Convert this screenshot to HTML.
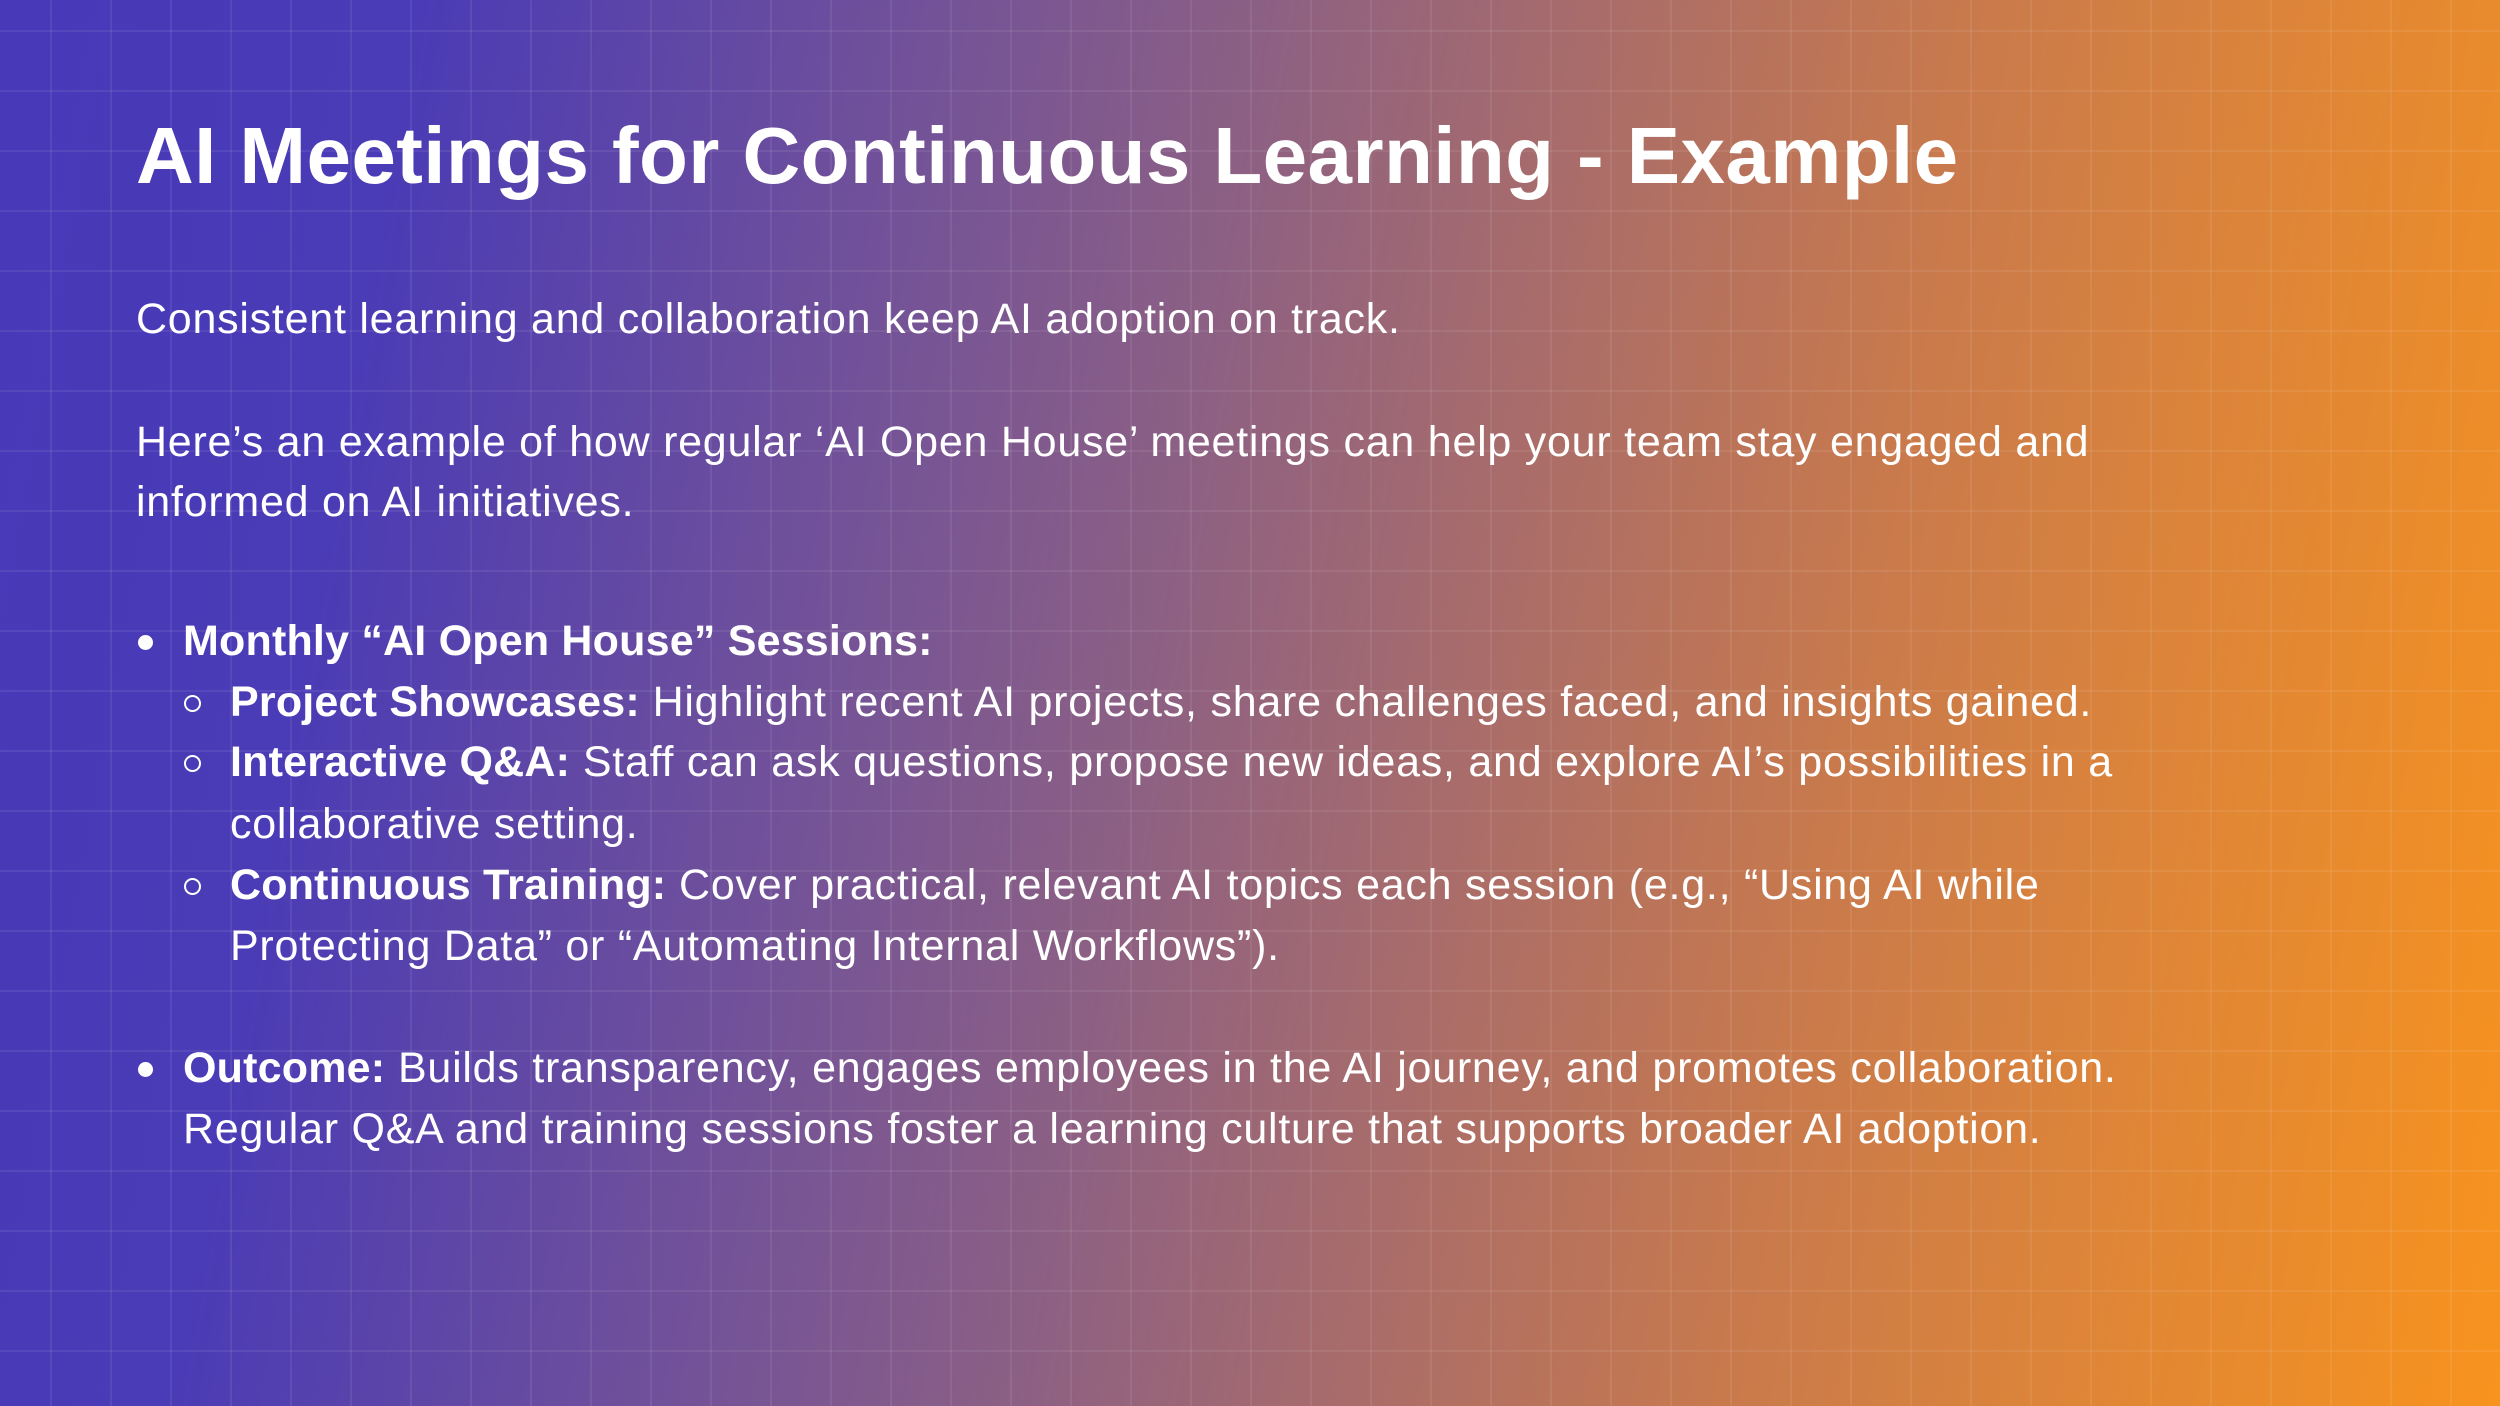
<!DOCTYPE html>
<html><head><meta charset="utf-8"><style>
html,body{margin:0;padding:0}
body{width:2500px;height:1406px;overflow:hidden;position:relative;font-family:"Liberation Sans",Arial,sans-serif;color:#fff;
background:linear-gradient(100deg,#4739b8 0%,#4a3bb6 15%,#8a5f86 45%,#c97a4c 72%,#f8931e 100%);}
.grid{position:absolute;inset:0;background-image:linear-gradient(to right,rgba(255,255,255,0.07) 2px,transparent 2px),linear-gradient(to bottom,rgba(255,255,255,0.07) 2px,transparent 2px);background-size:60px 60px;background-position:50px 30px;}
.l{position:absolute;white-space:nowrap;font-size:43px;line-height:61px;height:61px;letter-spacing:0.75px}
h1{position:absolute;left:136px;top:108px;margin:0;font-size:80px;line-height:96px;font-weight:bold;white-space:nowrap;letter-spacing:0.4px}
b{font-weight:bold;letter-spacing:0.2px}
.dot{position:absolute;width:15px;height:15px;border-radius:50%;background:#fff}
.circ{position:absolute;width:13px;height:13px;border-radius:50%;border:2.5px solid #fff}
</style></head><body>
<div class="grid"></div>
<h1>AI Meetings for Continuous Learning - Example</h1>
<div class="l" style="left:136px;top:289px">Consistent learning and collaboration keep AI adoption on track.</div>
<div class="l" style="left:136px;top:412px">Here’s an example of how regular ‘AI Open House’ meetings can help your team stay engaged and</div>
<div class="l" style="left:136px;top:472px">informed on AI initiatives.</div>
<div class="dot" style="left:138px;top:635px"></div>
<div class="l" style="left:183px;top:611px"><b>Monthly “AI Open House” Sessions:</b></div>
<div class="circ" style="left:184px;top:695px"></div>
<div class="l" style="left:230px;top:672px"><b>Project Showcases:</b> Highlight recent AI projects, share challenges faced, and insights gained.</div>
<div class="circ" style="left:184px;top:755px"></div>
<div class="l" style="left:230px;top:732px"><b>Interactive Q&amp;A:</b> Staff can ask questions, propose new ideas, and explore AI’s possibilities in a</div>
<div class="l" style="left:230px;top:794px">collaborative setting.</div>
<div class="circ" style="left:184px;top:878px"></div>
<div class="l" style="left:230px;top:855px"><b>Continuous Training:</b> Cover practical, relevant AI topics each session (e.g., “Using AI while</div>
<div class="l" style="left:230px;top:916px">Protecting Data” or “Automating Internal Workflows”).</div>
<div class="dot" style="left:138px;top:1062px"></div>
<div class="l" style="left:183px;top:1038px"><b>Outcome:</b> Builds transparency, engages employees in the AI journey, and promotes collaboration.</div>
<div class="l" style="left:183px;top:1099px">Regular Q&amp;A and training sessions foster a learning culture that supports broader AI adoption.</div>
</body></html>
